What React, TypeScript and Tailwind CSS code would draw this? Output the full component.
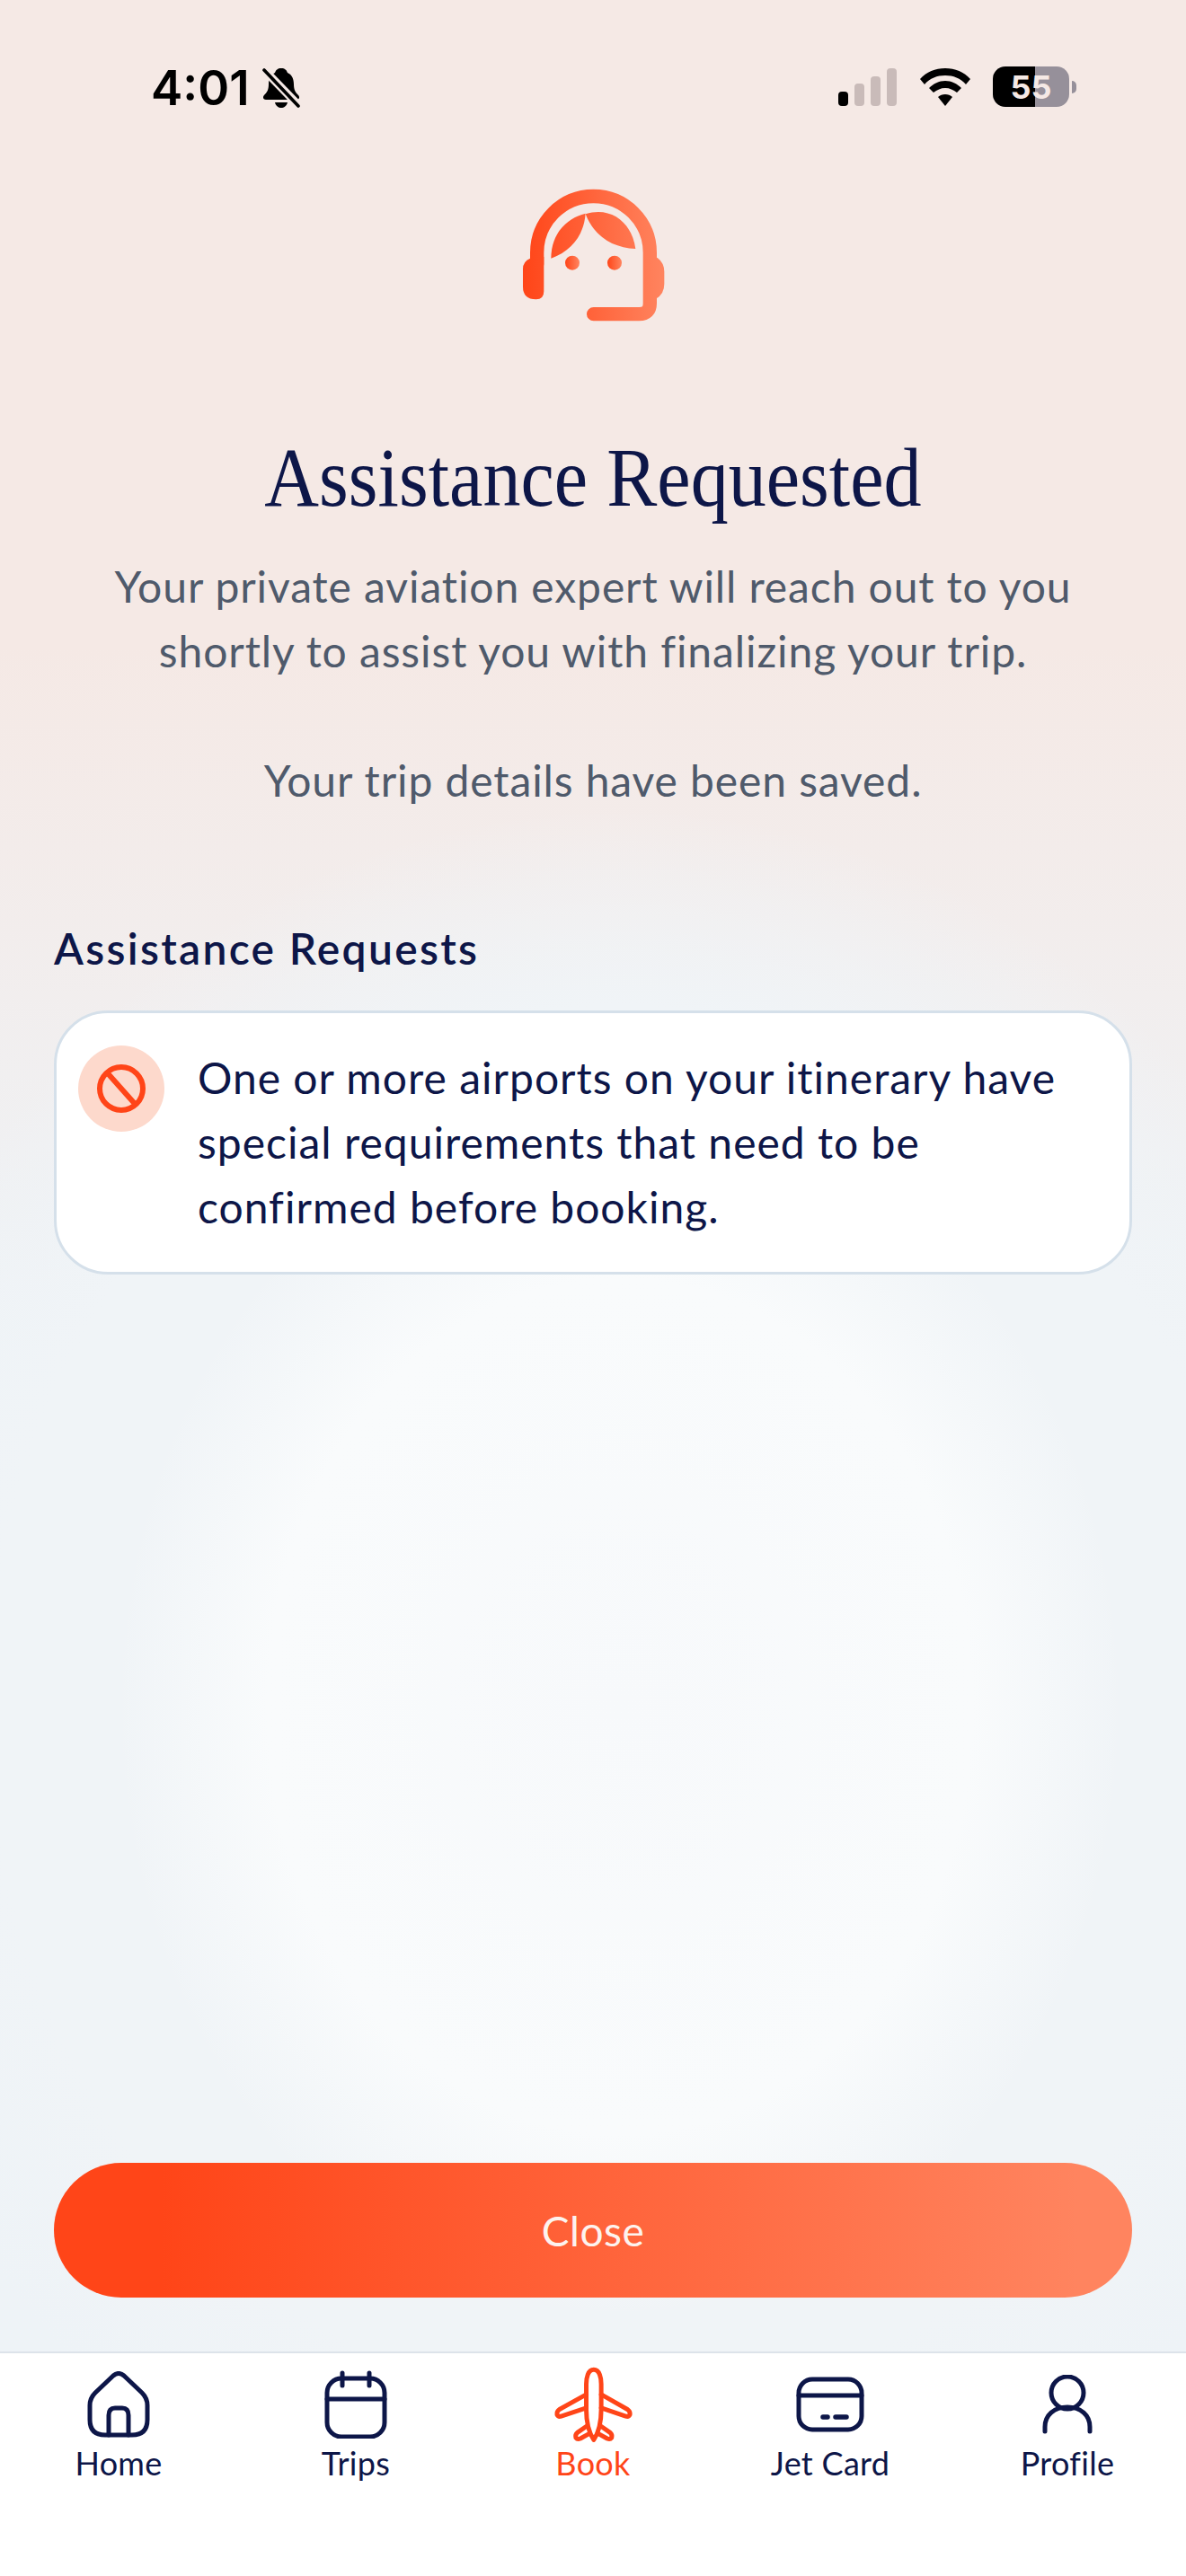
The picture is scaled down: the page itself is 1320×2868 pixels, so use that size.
const navy = '#0d1648';
const orange = '#ff4518';

function HeadsetIcon() {
  return (
    <svg width="220" height="180" viewBox="0 0 660 540">
      <defs>
        <linearGradient id="headset" gradientUnits="userSpaceOnUse" x1="96" y1="0" x2="568" y2="0">
          <stop offset="0" stopColor="#ff4518" />
          <stop offset="1" stopColor="#ff845f" />
        </linearGradient>
        <linearGradient id="eye" x1="0" y1="0" x2="1" y2="0">
          <stop offset="0" stopColor="#ff4518" />
          <stop offset="1" stopColor="#ff845f" />
        </linearGradient>
      </defs>
      <path d="M143 310V271A188 188 0 0 1 520 271V440Q520 476 484 476H332" fill="none" stroke="url(#headset)" strokeWidth="46" strokeLinecap="round" />
      <path d="M120 290L140 285H166V400Q166 427 140 427Q96 427 96 385V325Q96 300 120 290Z" fill="url(#headset)" />
      <path d="M520 285L545 288Q568 305 568 335V375Q568 410 540 425H520Z" fill="url(#headset)" />
      <path d="M190 290C190 210 240 155 305 140C300 210 260 265 190 290Z" fill="url(#headset)" />
      <path d="M305 142C390 115 460 170 472 258C400 255 335 220 305 142Z" fill="url(#headset)" />
      <circle cx="261" cy="305" r="24" fill="url(#eye)" />
      <circle cx="402" cy="305" r="24" fill="url(#eye)" />
    </svg>
  );
}

function BellSlash() {
  return (
    <svg width="42" height="46" viewBox="0 0 42 46">
      <path d="M21 1C25 1 27 3 28 6C33 8 35 13 35 19C35 25 37 28 40 31C42 33 41 36 38 36H4C1 36 0 33 2 31C5 28 7 25 7 19C7 13 9 8 14 6C15 3 17 1 21 1Z" fill="#000" />
      <path d="M14 39H28C27 43 24 45 21 45C18 45 15 43 14 39Z" fill="#000" />
      <path d="M3 4L40 42" stroke="#f5e9e5" strokeWidth="9" />
      <path d="M2 3L40 43" stroke="#000" strokeWidth="3.6" strokeLinecap="round" />
    </svg>
  );
}

function StatusBar() {
  return (
    <div className="flex h-[180px] shrink-0 items-start justify-between pl-[168px] pr-[122px] pt-[70px] font-['Inter',sans-serif]">
      <div className="flex items-center gap-[14px]">
        <span className="text-[53px] font-semibold leading-[56px] text-black">4:01</span>
        <BellSlash />
      </div>
      <div className="flex items-center pt-[4px]">
        <svg width="66" height="42" viewBox="0 0 66 42">
          <rect x="0" y="26" width="11" height="16" rx="4" fill="#000" />
          <rect x="18" y="17" width="11" height="25" rx="4" fill="#c9bbb9" />
          <rect x="36" y="9" width="11" height="33" rx="4" fill="#c9bbb9" />
          <rect x="54" y="0" width="11" height="42" rx="4" fill="#c9bbb9" />
        </svg>
        <svg className="ml-[24px]" width="58" height="42" viewBox="0 0 58 42">
          <path d="M29 0C40 0 50 4 57 12L52 18C46 11 38 8 29 8C20 8 12 11 6 18L1 12C8 4 18 0 29 0Z" fill="#000" />
          <path d="M29 14C36 14 42 17 47 22L42 27C38 24 34 22 29 22C24 22 20 24 16 27L11 22C16 17 22 14 29 14Z" fill="#000" />
          <path d="M29 29C32 29 35 30 37 32L29 42L21 32C23 30 26 29 29 29Z" fill="#000" />
        </svg>
        <div className="ml-[24px] flex h-[45px] w-[85px] items-center justify-center rounded-[14px] bg-[linear-gradient(90deg,#000_0,#000_55%,#96909a_55%,#96909a_100%)] text-[36px] font-bold leading-none text-[#f5e9e5]">
          55
        </div>
        <div className="ml-[3px] h-[14px] w-[5px] rounded-r-full bg-[#96909a]" />
      </div>
    </div>
  );
}

function HomeIcon() {
  return (
    <svg width="70" height="74" viewBox="0 0 70 74" fill="none" stroke={navy} strokeWidth="5" strokeLinecap="round" strokeLinejoin="round">
      <path d="M29 5Q35 0 41 5L61 24Q67 30 67 38V54Q67 71 50 71H20Q3 71 3 54V38Q3 30 9 24Z" />
      <path d="M24 71V49Q24 41 31 41H39Q46 41 46 49V71" />
    </svg>
  );
}

function TripsIcon() {
  return (
    <svg width="70" height="76" viewBox="0 0 70 76" fill="none" stroke={navy} strokeWidth="5" strokeLinecap="round" strokeLinejoin="round">
      <rect x="3" y="9" width="64" height="65" rx="16" />
      <path d="M3 32H67" />
      <path d="M20 3V17M50 3V17" />
    </svg>
  );
}

function PlaneIcon() {
  return (
    <svg width="88" height="87" viewBox="50 45 265 260" fill="none" stroke={orange} strokeWidth="15" strokeLinecap="round" strokeLinejoin="round">
      <path d="M185 57C165 57 160 85 160 105V190C160 230 170 270 185 292C200 270 210 230 210 190V105C210 85 205 57 185 57Z" />
      <path d="M160 140L70 190Q60 197 62 208Q66 216 76 213L160 185" />
      <path d="M210 140L298 190Q308 197 306 208Q302 216 292 213L210 185" />
      <path d="M163 245L130 268Q122 275 125 285Q130 292 140 288L172 270" />
      <path d="M207 245L240 268Q248 275 245 285Q240 292 230 288L198 270" />
    </svg>
  );
}

function JetCardIcon() {
  return (
    <svg width="76" height="62" viewBox="0 0 76 62" fill="none" stroke={navy} strokeWidth="5" strokeLinecap="round" strokeLinejoin="round">
      <rect x="3" y="3" width="70" height="56" rx="15" />
      <path d="M3 21H73" />
      <path d="M30 45H35M44 45H56" strokeWidth="5.5" />
    </svg>
  );
}

function ProfileIcon() {
  return (
    <svg width="56" height="66" viewBox="0 0 56 66" fill="none" stroke={navy} strokeWidth="5" strokeLinecap="round" strokeLinejoin="round">
      <ellipse cx="28" cy="20" rx="18" ry="18" />
      <path d="M3 63V58C3 45 13 36 28 36C43 36 53 45 53 58V63" />
    </svg>
  );
}

const tabs = [
  { label: 'Home', icon: <HomeIcon /> },
  { label: 'Trips', icon: <TripsIcon /> },
  { label: 'Book', icon: <PlaneIcon />, active: true },
  { label: 'Jet Card', icon: <JetCardIcon /> },
  { label: 'Profile', icon: <ProfileIcon /> },
];

function BottomNav() {
  return (
    <nav className="grid h-[250px] shrink-0 grid-cols-5 border-t-2 border-[#dde3ea] bg-white">
      {tabs.map(tab => (
        <div key={tab.label} className="flex flex-col items-center pt-[11px]">
          <div className="flex h-[92px] items-center justify-center">{tab.icon}</div>
          <span className={`text-[36px] leading-[38px] tracking-[0.3px] ${tab.active ? 'text-[#ff4518]' : 'text-[#0d1648]'}`}>
            {tab.label}
          </span>
        </div>
      ))}
    </nav>
  );
}

export default function App() {
  return (
    <div className="flex h-[2868px] w-[1320px] flex-col overflow-hidden font-['Lato',sans-serif]">
      <main className="flex flex-1 flex-col bg-[radial-gradient(ellipse_560px_680px_at_690px_1900px,#f7f9fb_0%,#f9fbfc_70%,rgba(249,251,252,0)_100%),radial-gradient(ellipse_900px_1000px_at_690px_1900px,#f0f4f7_78%,rgba(240,244,247,0)_100%),linear-gradient(180deg,#f5e9e5_0,#f5e9e5_720px,#eef3f7_1500px,#eef3f7_2618px)]">
        <StatusBar />
        <div className="flex justify-center pt-[11px]">
          <HeadsetIcon />
        </div>
        <h1 className="mt-[110px] scale-x-[0.895] whitespace-nowrap text-center font-['Liberation_Serif',serif] text-[94px] leading-[100px] text-[#0d1648]">
          Assistance Requested
        </h1>
        <p className="mt-[36px] whitespace-nowrap text-center text-[48px] leading-[72px] tracking-[0.9px] text-[#4f5a6b]">
          Your private aviation expert will reach out to you
          <br />
          shortly to assist you with finalizing your trip.
          <br />
          <br />
          Your trip details have been saved.
        </p>
        <h2 className="mt-[121px] px-[60px] text-[48px] font-semibold leading-[60px] tracking-[2.3px] text-[#0d1648]">
          Assistance Requests
        </h2>
        <div className="mx-[60px] mt-[39px] flex h-[294px] gap-[37px] rounded-[60px] border-[3px] border-[#d5e0ea] bg-white pl-[24px] pt-[36px]">
          <div className="flex h-[96px] w-[96px] shrink-0 items-center justify-center rounded-full bg-[#fdd9cc]">
            <svg width="56" height="56" viewBox="0 0 56 56" fill="none" stroke={orange} strokeWidth="6">
              <circle cx="28" cy="28" r="24" />
              <path d="M12 10L44 46" />
            </svg>
          </div>
          <p className="whitespace-nowrap text-[48px] leading-[72px] tracking-[1px] text-[#0d1648]">
            One or more airports on your itinerary have
            <br />
            special requirements that need to be
            <br />
            confirmed before booking.
          </p>
        </div>
        <div className="flex-1" />
        <button className="mx-[60px] mb-[60px] h-[150px] rounded-full bg-[linear-gradient(90deg,#ff4518_10%,#ff845f_95%)] text-[46px] tracking-[0.5px] text-[#fdf3ef]">
          Close
        </button>
      </main>
      <BottomNav />
    </div>
  );
}
